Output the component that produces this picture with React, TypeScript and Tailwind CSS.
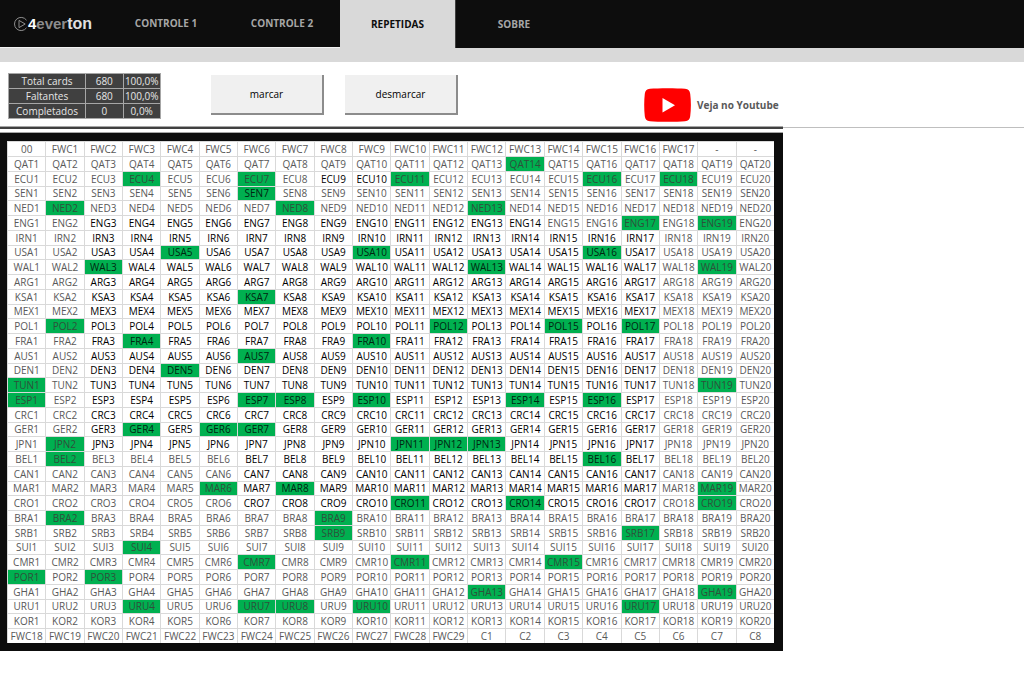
import React from 'react';
import clsx from 'clsx';

type TeamRow = {
    code: string;
    // numbers that are marked as repeated
    marked?: number[];
    // first and last number written in the darker ink
    dark?: [number, number];
};

const TEAMS: TeamRow[] = [
    { code: 'QAT', marked: [14] },
    { code: 'ECU', marked: [4, 7, 11, 16, 18], dark: [9, 10] },
    { code: 'SEN', marked: [7], dark: [7, 7] },
    { code: 'NED', marked: [2, 8, 13] },
    { code: 'ENG', marked: [17, 19], dark: [3, 14] },
    { code: 'IRN', dark: [3, 17] },
    { code: 'USA', marked: [5, 10, 16], dark: [3, 17] },
    { code: 'WAL', marked: [3, 13, 19], dark: [3, 17] },
    { code: 'ARG', dark: [3, 17] },
    { code: 'KSA', marked: [7], dark: [3, 17] },
    { code: 'MEX', dark: [3, 17] },
    { code: 'POL', marked: [2, 12, 15, 17], dark: [3, 17] },
    { code: 'FRA', marked: [4, 10], dark: [3, 17] },
    { code: 'AUS', marked: [7], dark: [3, 17] },
    { code: 'DEN', marked: [5], dark: [3, 17] },
    { code: 'TUN', marked: [1, 19], dark: [3, 17] },
    { code: 'ESP', marked: [1, 7, 8, 10, 14, 16], dark: [3, 17] },
    { code: 'CRC', dark: [3, 17] },
    { code: 'GER', marked: [4, 6, 7], dark: [3, 17] },
    { code: 'JPN', marked: [2, 11, 12, 13], dark: [3, 17] },
    { code: 'BEL', marked: [2, 16], dark: [7, 17] },
    { code: 'CAN', dark: [7, 17] },
    { code: 'MAR', marked: [6, 8, 19], dark: [7, 17] },
    { code: 'CRO', marked: [11, 14, 19], dark: [7, 17] },
    { code: 'BRA', marked: [2, 9] },
    { code: 'SRB', marked: [9, 17] },
    { code: 'SUI', marked: [4] },
    { code: 'CMR', marked: [7, 11, 15] },
    { code: 'POR', marked: [1, 3] },
    { code: 'GHA', marked: [13, 19] },
    { code: 'URU', marked: [4, 7, 8, 10, 17] },
    { code: 'KOR' },
];

type Card = { label: string; marked: boolean; dark: boolean };

const range = (count: number, start = 1) => Array.from({ length: count }, (_, i) => start + i);
const plain = (label: string): Card => ({ label, marked: false, dark: false });

const ROWS: Card[][] = [
    ['00', ...range(17).map((n) => `FWC${n}`), '-', '-'].map(plain),
    ...TEAMS.map(({ code, marked = [], dark }) =>
        range(20).map((n) => ({
            label: `${code}${n}`,
            marked: marked.includes(n),
            dark: !!dark && n >= dark[0] && n <= dark[1],
        })),
    ),
    [...range(12, 18).map((n) => `FWC${n}`), ...range(8).map((n) => `C${n}`)].map(plain),
];

const TABS = ['CONTROLE 1', 'CONTROLE 2', 'REPETIDAS', 'SOBRE'];

const STATS = [
    ['Total cards', '680', '100,0%'],
    ['Faltantes', '680', '100,0%'],
    ['Completados', '0', '0,0%'],
];

const textColor = ({ marked, dark }: Card) => {
    if (dark) return marked ? 'text-[#002610]' : 'text-black';
    return marked ? 'text-[#2f4f3b]' : 'text-[#595959]';
};

const Logo: React.FC = () => (
    <a href="#" className="flex w-[108px] shrink-0 items-center border-b border-[#f2f2f2] pl-[14px]">
        <svg viewBox="0 0 14 16" className="h-4 w-[14px] shrink-0" fill="none" stroke="#8c8c8c">
            <path d="M12.5 4.2A6.6 6.6 0 1 0 12.5 11.8" />
            <path d="M5 4.4v7.2L11.2 8z" strokeLinejoin="round" />
        </svg>
        <span className="flex items-baseline font-['Liberation_Sans',sans-serif] text-[15px] leading-[24px] font-bold text-white">
            4<span className="text-[#8c8c8c]">ever</span>
            <span className="text-[16px] text-[#e0e0e0]">ton</span>
        </span>
    </a>
);

const Header: React.FC = () => (
    <header className="border-b-[14px] border-[#d9d9d9] bg-[#0d0d0d]">
        <div className="flex h-12">
            <Logo />
            <nav className="flex">
                {TABS.map((tab) => (
                    <a
                        key={tab}
                        href="#"
                        className={clsx(
                            'flex w-[116px] items-center justify-center text-[10px] font-bold',
                            tab === 'REPETIDAS'
                                ? 'border-r border-[#404040] bg-[#d9d9d9] text-[#0d0d0d]'
                                : 'text-[#a6a6a6]',
                            tab.startsWith('CONTROLE') && 'border-b border-[#f2f2f2]',
                        )}
                    >
                        {tab}
                    </a>
                ))}
            </nav>
        </div>
    </header>
);

const ActionButton: React.FC<{ label: string }> = ({ label }) => (
    <button
        type="button"
        className="h-10 w-[113px] border-r-2 border-b-2 border-[#8c8c8c] bg-[#f0f0f0] text-[10px] text-black"
    >
        {label}
    </button>
);

const Toolbar: React.FC = () => (
    <section className="flex h-16 items-start pl-2">
        <table className="mt-[11px] w-[153px] table-fixed border-collapse bg-[#404040] text-center text-[10px] leading-[14px] text-[#e6e6e6]">
            <tbody>
                {STATS.map(([name, count, share]) => (
                    <tr key={name}>
                        <th scope="row" className="w-[77px] border border-[#a6a6a6] p-0 font-normal">{name}</th>
                        <td className="border border-[#a6a6a6] p-0">{count}</td>
                        <td className="border border-[#a6a6a6] p-0">{share}</td>
                    </tr>
                ))}
            </tbody>
        </table>
        <div className="mt-[13px] ml-[50px] flex gap-[21px]">
            <ActionButton label="marcar" />
            <ActionButton label="desmarcar" />
        </div>
        <a href="#" className="mt-[26px] ml-[186px] flex items-center gap-[6px] text-[10px] font-bold text-[#595959]">
            <svg viewBox="0 0 47 34" className="h-[34px] w-[47px]">
                <path
                    d="M6 .8C14 0 33 0 41 .8c3.500.3 4.800 2 5.200 5 .9 7 .9 15.500 0 22.400-.4 3-1.700 4.700-5.200 5-8 .8-27 .8-35 0-3.500-.3-4.800-2-5.200-5C0 21.300 0 12.800.8 5.800 1.200 2.800 2.500 1.100 6 .8z"
                    fill="#f00"
                />
                <path d="M18.500 10v14.500L31 17.200z" fill="#fff" />
            </svg>
            Veja no Youtube
        </a>
    </section>
);

const Divider: React.FC = () => (
    <div className="mb-[3px] flex items-center">
        <div className="h-[3px] w-full max-w-[783px] border-t border-[#a6a6a6] bg-[#404040]" />
        <div className="h-px flex-1 bg-[#bfbfbf]" />
    </div>
);

const Board: React.FC = () => (
    <main className="w-full max-w-[783px] border-t border-[#a6a6a6] bg-[#0d0d0d] pt-2 pr-[9px] pb-2 pl-[7px]">
        <table className="w-full table-fixed border-separate border-spacing-0 bg-white text-center text-[10px] leading-[13px]">
            <tbody>
                {ROWS.map((cards, i) => (
                    <tr key={i} className="h-[15px] nth-[4n]:h-[14px]">
                        {cards.map((card, j) => (
                            <td
                                key={j}
                                className={clsx(
                                    'border-t border-l border-[#d9d9d9] p-0 whitespace-nowrap',
                                    card.marked && 'bg-[#00b050]',
                                    textColor(card),
                                )}
                            >
                                {card.label}
                            </td>
                        ))}
                    </tr>
                ))}
            </tbody>
        </table>
    </main>
);

export default function App() {
    return (
        <div className="min-h-screen bg-white font-['Open_Sans',sans-serif]">
            <Header />
            <Toolbar />
            <Divider />
            <Board />
        </div>
    );
}
